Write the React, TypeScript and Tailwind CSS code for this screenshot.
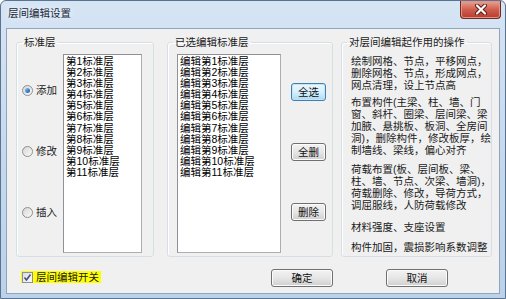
import React, { FC } from "react";

const floors = Array.from({ length: 11 }, (_, i) => `第${i + 1}标准层`);

const Radio: FC<{ label: string; checked?: boolean }> = ({ label, checked }) => (
  <label className="flex items-center h-[12px] gap-[3px]">
    <span className="w-[11px] h-[11px] rounded-full border border-[#8e8f8f] bg-gradient-to-br from-[#d6d6d6] to-[#fbfbfb] flex items-center justify-center">
      {checked && (
        <span className="w-[5px] h-[5px] rounded-full bg-gradient-to-br from-[#7cc8f6] to-[#1756a6]" />
      )}
    </span>
    <span className="text-[10.5px] leading-[12px] text-[#1a1a1a]">{label}</span>
  </label>
);

const Btn: FC<{ label: string; w: string; focused?: boolean }> = ({ label, w, focused }) => (
  <button
    className={`${w} h-[18px] rounded-[3px] border text-[10.5px] leading-[16px] text-[#111] ${
      focused
        ? "border-[#3c7fb1] bg-gradient-to-b from-[#eaf6fd] via-[#d9f0fc] to-[#a7d9f5] shadow-[inset_0_0_0_1px_#c4e5f6]"
        : "border-[#707070] bg-gradient-to-b from-[#f2f2f2] via-[#e6e6e6] to-[#cfcfcf] shadow-[inset_0_0_0_1px_#fcfcfc]"
    }`}
  >
    {label}
  </button>
);

const Group: FC<{ title: string; className: string; children: React.ReactNode }> = ({
  title,
  className,
  children,
}) => (
  <fieldset
    className={`border border-[#d5dfe5] rounded-[3px] shadow-[inset_1px_1px_0_#fff] ${className}`}
  >
    <legend className="ml-[5px] px-[2px] text-[10.5px] leading-[12px] text-[#1a1a1a]">{title}</legend>
    {children}
  </fieldset>
);

export default function App() {
  return (
    <div className="w-[506px] h-[299px] flex flex-col overflow-hidden rounded-t-[6px] border border-[#5a7390] bg-gradient-to-b from-[#d6e5f4] via-[#c6d9ee] to-[#bcd2ea] font-['Liberation_Sans','Noto_Sans_CJK_SC',sans-serif]">
      {/* title bar */}
      <div className="h-[27px] flex items-start">
        <span className="pl-[7px] pt-[6px] text-[10.5px] leading-[12px] text-[#1b2a3a] [text-shadow:0_0_6px_#fff]">
          层间编辑设置
        </span>
        <div className="flex-1" />
        <div className="mr-[4px] w-[41px] h-[18px] rounded-b-[4px] border border-t-0 border-[#6b2a22] bg-gradient-to-b from-[#e8a493] via-[#cf5e4f] to-[#b8392b] flex items-center justify-center shadow-[inset_0_0_0_1px_#e79484]">
          <svg width="14" height="11" viewBox="0 0 14 11">
            <path d="M3 1.5 L11 9.5 M11 1.5 L3 9.5" stroke="#5a1b12" strokeWidth="4" strokeLinecap="round" />
            <path d="M3 1.5 L11 9.5 M11 1.5 L3 9.5" stroke="#fff" strokeWidth="2.2" strokeLinecap="round" />
          </svg>
        </div>
      </div>

      {/* client area */}
      <div className="flex-1 mx-[5px] mb-[4px] border border-[#8fa4bd] bg-[#f0f0f0] flex flex-col">
        <div className="flex pt-[7px] pl-[9px]">
          <Group title="标准层" className="w-[138px]">
            <div className="flex pt-[6px] pb-[3px]">
              <div className="w-[46px] pl-[5px] pt-[30px] flex flex-col gap-[49px]">
                <Radio label="添加" checked />
                <Radio label="修改" />
                <Radio label="插入" />
              </div>
              <div className="w-[79px] h-[199px] border border-[#abadb3] border-l-[#8e9197] border-t-[#8e9197] bg-white pl-[2px] pt-[1px]">
                {floors.map((f) => (
                  <div key={f} className="text-[10.5px] leading-[11.1px] text-black whitespace-nowrap">
                    {f}
                  </div>
                ))}
              </div>
            </div>
          </Group>

          <Group title="已选编辑标准层" className="ml-[13px] w-[166px]">
            <div className="flex pt-[6px] pb-[3px] pl-[9px]">
              <div className="w-[104px] h-[199px] border border-[#abadb3] border-l-[#8e9197] border-t-[#8e9197] bg-white pl-[2px] pt-[1px]">
                {floors.map((f) => (
                  <div key={f} className="text-[10.5px] leading-[11.1px] text-black whitespace-nowrap">
                    编辑{f}
                  </div>
                ))}
              </div>
              <div className="ml-[10px] pt-[29px] flex flex-col gap-[42px]">
                <Btn label="全选" w="w-[35px]" focused />
                <Btn label="全删" w="w-[35px]" />
                <Btn label="删除" w="w-[35px]" />
              </div>
            </div>
          </Group>

          <Group title="对层间编辑起作用的操作" className="ml-[8px] w-[149px]">
            <div className="pt-[7px] pl-[9px] text-[10.5px] leading-[12px] text-[#1a1a1a] whitespace-nowrap">
              <p>
                绘制网格、节点，平移网点，
                <br />
                删除网格、节点，形成网点，
                <br />
                网点清理，设上节点高
              </p>
              <p className="mt-[5px]">
                布置构件(主梁、柱、墙、门
                <br />
                窗、斜杆、圈梁、层间梁、梁
                <br />
                加腋、悬挑板、板洞、全房间
                <br />
                洞)，删除构件，修改板厚，绘
                <br />
                制墙线、梁线，偏心对齐
              </p>
              <p className="mt-[7px]">
                荷载布置(板、层间板、梁、
                <br />
                柱、墙、节点、次梁、墙洞)，
                <br />
                荷载删除、修改，导荷方式，
                <br />
                调屈服线，人防荷载修改
              </p>
              <p className="mt-[10px]">材料强度、支座设置</p>
              <p className="mt-[8px]">构件加固，震损影响系数调整</p>
            </div>
          </Group>
        </div>

        {/* bottom row */}
        <div className="flex items-center h-[18px] mt-[11px]">
          <label className="ml-[14px] w-[80px] h-[12px] bg-[#ffff00] flex items-center gap-[3px] pl-[1px]">
            <span className="w-[11px] h-[11px] border border-[#8e8f8f] bg-gradient-to-br from-[#dcdcdc] to-[#fbfbfb] flex items-center justify-center">
              <svg width="9" height="9" viewBox="0 0 9 9">
                <path d="M1.5 4.5 L3.5 7 L7.5 1.5" fill="none" stroke="#3b4f8a" strokeWidth="1.6" />
              </svg>
            </span>
            <span className="text-[10.5px] leading-[12px] text-[#1a1a1a]">层间编辑开关</span>
          </label>
          <div className="ml-[170px]">
            <Btn label="确定" w="w-[62px]" />
          </div>
          <div className="ml-[53px]">
            <Btn label="取消" w="w-[62px]" />
          </div>
        </div>
      </div>
    </div>
  );
}
